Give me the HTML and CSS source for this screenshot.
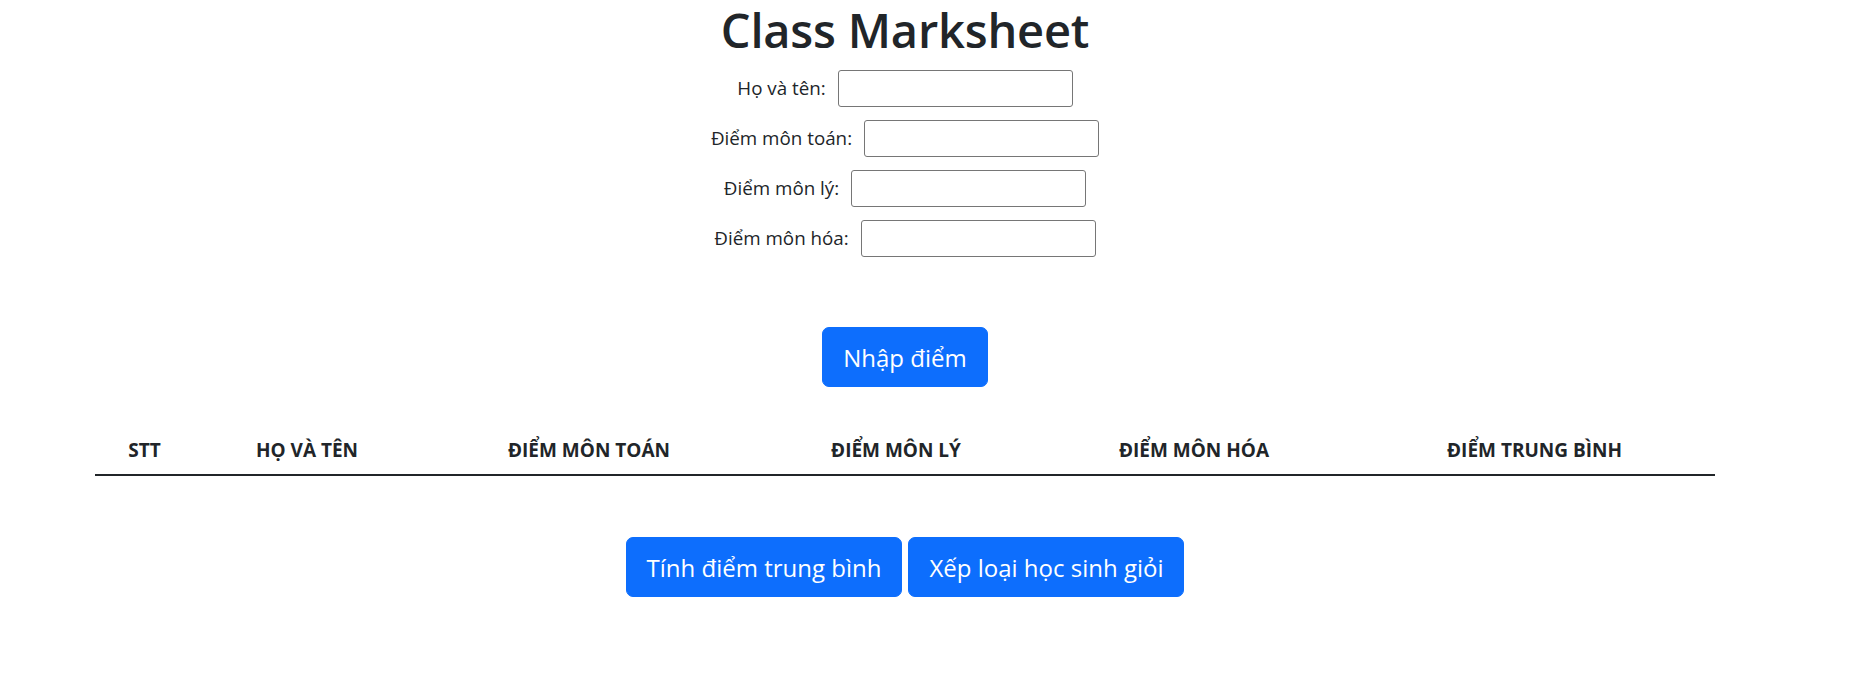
FILE: index.html
```html
<!DOCTYPE html>
<html lang="vi">
<head>
<meta charset="utf-8">
<title>Class Marksheet</title>
<link rel="stylesheet" href="styles.css">
</head>
<body>
<div class="page">
  <h1 class="title">Class Marksheet</h1>
  <form class="form">
    <div class="row"><label class="label" for="name">Họ và tên:</label><input class="field" id="name" type="text"></div>
    <div class="row"><label class="label" for="math">Điểm môn toán:</label><input class="field" id="math" type="text"></div>
    <div class="row"><label class="label" for="phys">Điểm môn lý:</label><input class="field" id="phys" type="text"></div>
    <div class="row"><label class="label" for="chem">Điểm môn hóa:</label><input class="field" id="chem" type="text"></div>
  </form>
  <div class="actions actions-top">
    <button class="btn" type="button">Nhập điểm</button>
  </div>
  <table class="table">
    <colgroup>
      <col class="c1"><col class="c2"><col class="c3"><col class="c4"><col class="c5"><col class="c6">
    </colgroup>
    <thead>
      <tr>
        <th>STT</th>
        <th>HỌ VÀ TÊN</th>
        <th>ĐIỂM MÔN TOÁN</th>
        <th>ĐIỂM MÔN LÝ</th>
        <th>ĐIỂM MÔN HÓA</th>
        <th>ĐIỂM TRUNG BÌNH</th>
      </tr>
    </thead>
    <tbody></tbody>
  </table>
  <div class="actions actions-bottom">
    <button class="btn" type="button">Tính điểm trung bình</button>
    <button class="btn" type="button">Xếp loại học sinh giỏi</button>
  </div>
</div>
</body>
</html>
```
FILE: styles.css
```css
* { box-sizing: border-box; }
html, body { margin: 0; padding: 0; background: #fff; }
body {
  font-family: "Open Sans", "Noto Sans", sans-serif;
  font-size: 20px;
  line-height: 1.5;
  color: #212529;
}
.page {
  width: 1620px;
  margin-left: 95px;
}
.title {
  margin: 0 0 10px;
  height: 60px;
  font-size: 47px;
  font-weight: 600;
  line-height: 60px;
  text-align: center;
  letter-spacing: -0.2px;
}
.form {
  display: flex;
  flex-direction: column;
  align-items: center;
  gap: 13px;
}
.row {
  display: flex;
  align-items: center;
  gap: 12px;
  height: 37px;
}
.label { font-size: 18.8px; }
.field {
  width: 235px;
  height: 37px;
  border: 1px solid #767676;
  border-radius: 3px;
  padding: 2px 4px;
  font: inherit;
}
.actions {
  display: flex;
  justify-content: center;
  gap: 6px;
}
.actions-top { margin-top: 70px; }
.actions-bottom { margin-top: 61px; }
.btn {
  height: 60px;
  padding: 2px 20px 0;
  border: 1px solid #0d6efd;
  border-radius: 7px;
  background: #0d6efd;
  color: #fff;
  font-family: inherit;
  font-size: 24px;
  line-height: 1.5;
  cursor: pointer;
}
.table {
  margin-top: 37px;
  width: 1620px;
  border-collapse: collapse;
  table-layout: fixed;
}
.c1 { width: 99px; }
.c2 { width: 226px; }
.c3 { width: 338px; }
.c4 { width: 276px; }
.c5 { width: 320px; }
.c6 { width: 361px; }
.table th {
  padding: 11px 10px 9px;
  height: 50px;
  font-size: 19px;
  font-weight: 700;
  line-height: 30px;
  text-align: center;
  white-space: nowrap;
  border-bottom: 2px solid #212529;
}
```
